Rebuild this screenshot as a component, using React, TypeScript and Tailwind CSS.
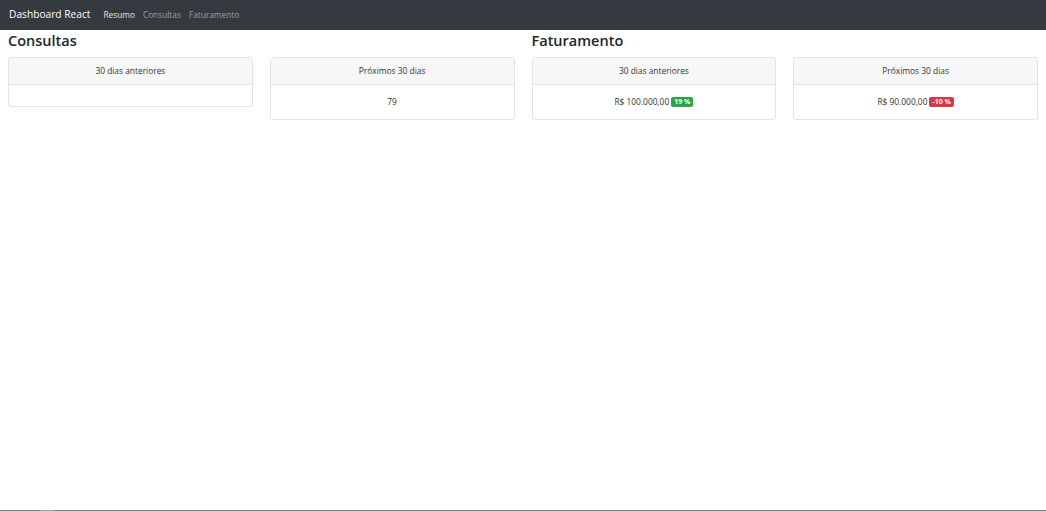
import React from "react";

function Card({ title, children, empty }: { title: string; children?: React.ReactNode; empty?: boolean }) {
  return (
    <div className="flex flex-col rounded-[3px] border border-[#e3e3e3] bg-white">
      <div className="flex h-[27px] items-center justify-center border-b border-[#e3e3e3] bg-[#f7f7f7] text-[8.4px] text-[#333]">
        {title}
      </div>
      <div className={`flex items-center justify-center text-[8.4px] text-[#333] ${empty ? "h-[21px]" : "h-[34px]"}`}>
        {children}
      </div>
    </div>
  );
}

export default function App() {
  return (
    <div className="flex h-[511px] w-[1046px] flex-col bg-white" style={{ fontFamily: '"Open Sans", "Noto Sans", sans-serif' }}>
      <nav className="flex h-[30px] items-center bg-[#343a40] pl-[9px]">
        <span className="mr-[13px] text-[10.2px] text-white">Dashboard React</span>
        <span className="mr-[8px] text-[8.3px] font-normal text-white/85">Resumo</span>
        <span className="mr-[8px] text-[8.3px] text-white/50">Consultas</span>
        <span className="text-[8.3px] text-white/50">Faturamento</span>
      </nav>
      <div className="grid flex-1 grid-cols-2 gap-x-[17px] px-[8px]">
        <div className="flex flex-col">
          <h3 className="h-[27px] pt-[1px] text-[14.5px] font-semibold leading-[20px] text-[#212529]">Consultas</h3>
          <div className="grid grid-cols-2 items-start gap-x-[17px]">
            <Card title="30 dias anteriores" empty />
            <Card title="Próximos 30 dias">79</Card>
          </div>
        </div>
        <div className="flex flex-col">
          <h3 className="h-[27px] pt-[1px] text-[14.5px] font-semibold leading-[20px] text-[#212529]">Faturamento</h3>
          <div className="grid grid-cols-2 items-start gap-x-[17px]">
            <Card title="30 dias anteriores">
              <span>R$ 100.000,00</span>
              <span className="ml-[2px] rounded-[2px] bg-[#28a745] px-[3px] text-[7px] font-bold leading-[10px] text-white">19 %</span>
            </Card>
            <Card title="Próximos 30 dias">
              <span>R$ 90.000,00</span>
              <span className="ml-[2px] rounded-[2px] bg-[#dc3545] px-[3px] text-[7px] font-bold leading-[10px] text-white">-10 %</span>
            </Card>
          </div>
        </div>
      </div>
      <div className="flex h-[1px] bg-[#808080]">
        <div className="ml-[40px] w-[13px] bg-[#a0a0a0]" />
      </div>
    </div>
  );
}
